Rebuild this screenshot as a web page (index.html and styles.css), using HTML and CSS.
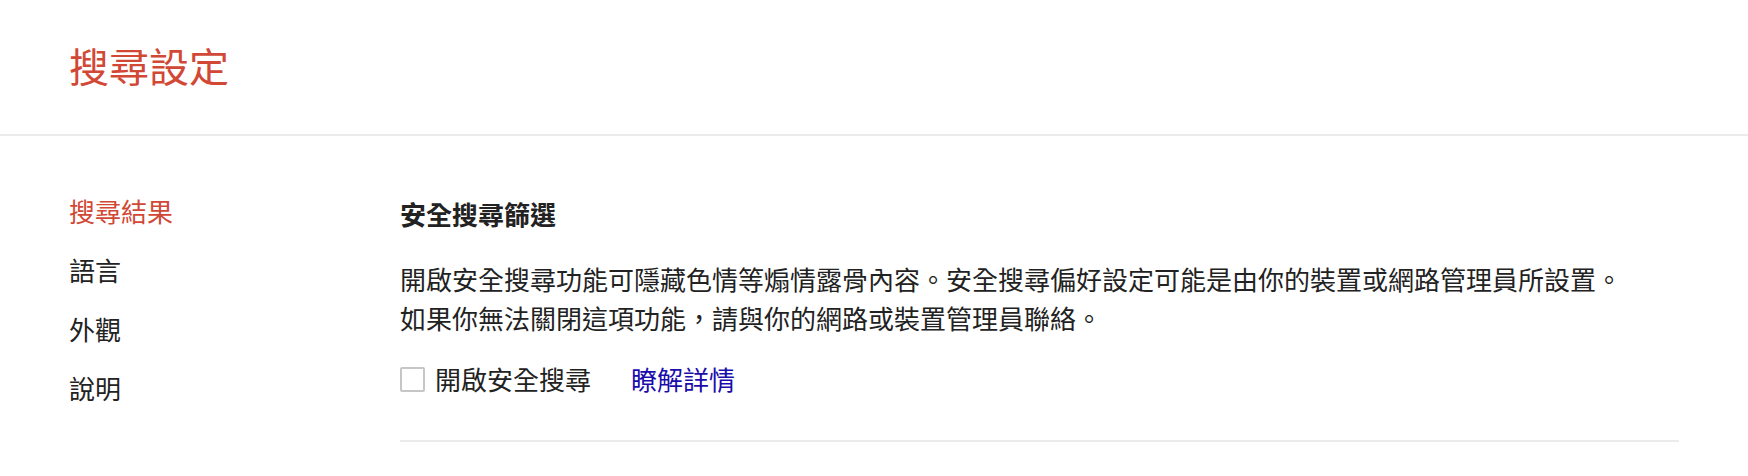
FILE: index.html
```html
<!DOCTYPE html>
<html lang="zh-Hant">
<head>
<meta charset="utf-8">
<title>搜尋設定</title>
<link rel="stylesheet" href="styles.css">
</head>
<body>
<header class="header">
  <h1 class="title">搜尋設定</h1>
</header>
<div class="main">
  <nav class="sidebar">
    <a class="nav-item active">搜尋結果</a>
    <a class="nav-item">語言</a>
    <a class="nav-item">外觀</a>
    <a class="nav-item">說明</a>
  </nav>
  <section class="content">
    <h2 class="section-title">安全搜尋篩選</h2>
    <p class="desc">開啟安全搜尋功能可隱藏色情等煽情露骨內容。安全搜尋偏好設定可能是由你的裝置或網路管理員所設置。<br>如果你無法關閉這項功能，請與你的網路或裝置管理員聯絡。</p>
    <div class="option-row">
      <label class="check-label"><span class="checkbox"></span>開啟安全搜尋</label>
      <a class="learn-more">瞭解詳情</a>
    </div>
    <div class="divider"></div>
  </section>
</div>
</body>
</html>
```
FILE: styles.css
```css
html, body {
  margin: 0;
  padding: 0;
  background: #fff;
}
body {
  font-family: "Noto Sans CJK TC", "Noto Sans", sans-serif;
  color: #222;
}
.header {
  height: 134px;
  border-bottom: 2px solid #ebebeb;
  display: flex;
  align-items: center;
  padding-left: 69px;
}
.title {
  margin: 0;
  font-size: 40px;
  font-weight: 400;
  line-height: 48px;
  color: #d14836;
  padding-bottom: 4px;
}
.main {
  display: flex;
}
.sidebar {
  width: 331px;
  padding-left: 69px;
  padding-top: 45px;
  display: flex;
  flex-direction: column;
}
.nav-item {
  font-size: 26px;
  line-height: 59px;
  color: #222;
}
.nav-item.active {
  color: #d14836;
}
.content {
  width: 1279px;
  padding-top: 60px;
}
.section-title {
  margin: 0;
  font-size: 26px;
  font-weight: 700;
  line-height: 36px;
  color: #222;
}
.desc {
  margin: 27px 0 0;
  font-size: 26px;
  line-height: 39px;
  color: #222;
}
.option-row {
  margin-top: 24px;
  display: flex;
  align-items: center;
  height: 36px;
  font-size: 26px;
  line-height: 36px;
}
.check-label {
  display: flex;
  align-items: center;
  color: #222;
}
.checkbox {
  width: 21px;
  height: 21px;
  border: 2px solid #c6c6c6;
  border-radius: 2px;
  margin-right: 10px;
  box-sizing: content-box;
}
.learn-more {
  margin-left: 40px;
  color: #1a0dab;
}
.divider {
  margin-top: 43px;
  height: 2px;
  background: #ebebeb;
}
```
